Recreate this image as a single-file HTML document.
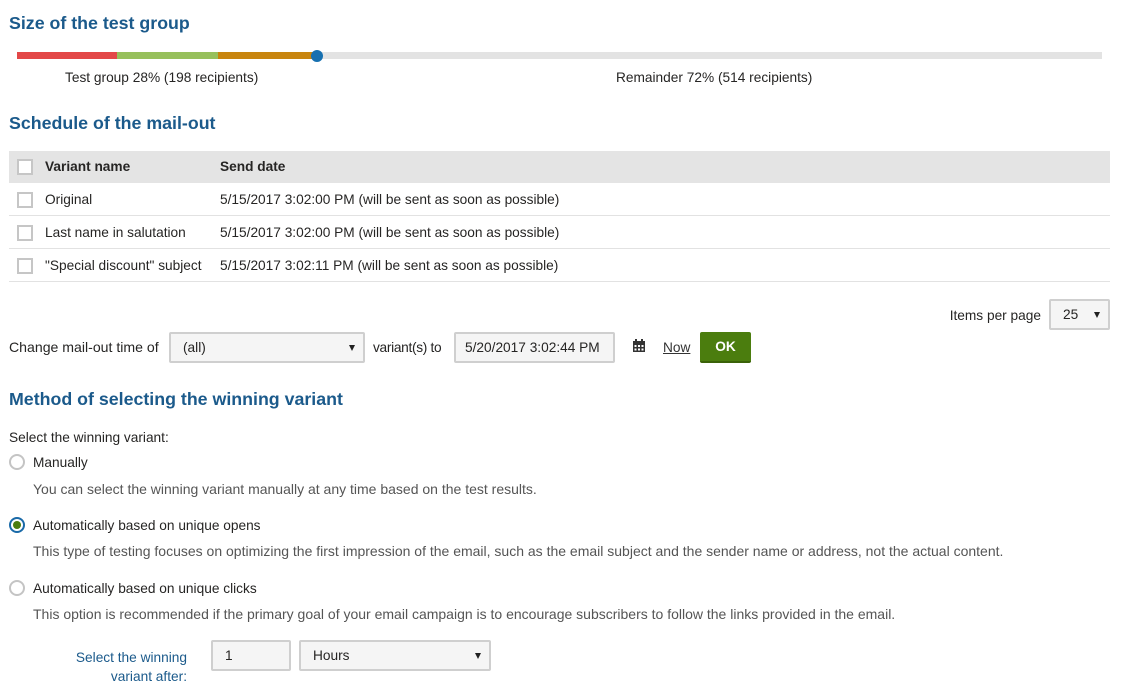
<!DOCTYPE html>
<html><head><meta charset="utf-8"><style>
*{box-sizing:border-box;margin:0;padding:0}
body{width:1121px;height:694px;overflow:hidden;background:#fff;font-family:"Liberation Sans",Arial,sans-serif;font-size:13.7px;color:#262524;position:relative}
.a{position:absolute;white-space:nowrap}
h2{position:absolute;font-size:17.8px;font-weight:bold;color:#1b5a8b;white-space:nowrap}
.cb{position:absolute;width:16px;height:16px;border:2px solid #c6c6c6;background:#fff}
.box{position:absolute;border:2px solid #cfcfcf;border-radius:2px;background:#f5f5f5;padding-left:12px;display:flex;align-items:center}
.arr{position:absolute;right:8px;top:50%;margin-top:-3px;width:0;height:0;border-left:3.5px solid transparent;border-right:3.5px solid transparent;border-top:6px solid #222}
.rad{position:absolute;width:16px;height:16px;border:2px solid #c4c4c4;border-radius:50%;background:#fff}
.row{position:absolute;left:9px;width:1101px;height:33px;border-bottom:1px solid #e2e2e2}
.desc{color:#555;font-size:14px}
</style></head><body>
<h2 style="left:9px;top:13px">Size of the test group</h2>
<div class="a" style="left:17px;top:52px;width:1085px;height:7px;background:#e3e3e3"></div>
<div class="a" style="left:17px;top:52px;width:100px;height:7px;background:#e34848"></div>
<div class="a" style="left:117px;top:52px;width:101px;height:7px;background:#97c05c"></div>
<div class="a" style="left:218px;top:52px;width:99px;height:7px;background:#c8850e"></div>
<div class="a" style="left:311px;top:50px;width:12px;height:12px;border-radius:50%;background:#1770b0"></div>
<div class="a" style="left:65px;top:70px">Test group 28% (198 recipients)</div>
<div class="a" style="left:616px;top:70px">Remainder 72% (514 recipients)</div>

<h2 style="left:9px;top:113px">Schedule of the mail-out</h2>
<div class="a" style="left:9px;top:151px;width:1101px;height:32px;background:#e4e4e4"></div>
<div class="cb" style="left:17px;top:159px"></div>
<div class="a" style="left:45px;top:159px;font-weight:bold">Variant name</div>
<div class="a" style="left:220px;top:159px;font-weight:bold">Send date</div>
<div class="row" style="top:183px"></div>
<div class="cb" style="left:17px;top:192px"></div>
<div class="a" style="left:45px;top:192px">Original</div>
<div class="a" style="left:220px;top:192px">5/15/2017 3:02:00 PM (will be sent as soon as possible)</div>
<div class="row" style="top:216px"></div>
<div class="cb" style="left:17px;top:225px"></div>
<div class="a" style="left:45px;top:225px">Last name in salutation</div>
<div class="a" style="left:220px;top:225px">5/15/2017 3:02:00 PM (will be sent as soon as possible)</div>
<div class="row" style="top:249px"></div>
<div class="cb" style="left:17px;top:258px"></div>
<div class="a" style="left:45px;top:258px">"Special discount" subject</div>
<div class="a" style="left:220px;top:258px">5/15/2017 3:02:11 PM (will be sent as soon as possible)</div>

<div class="a" style="right:80px;top:308px">Items per page</div>
<div class="box" style="left:1049px;top:299px;width:61px;height:31px">25<span class="arr"></span></div>

<div class="a" style="left:9px;top:340px;transform:scaleX(1.03);transform-origin:left">Change mail-out time of</div>
<div class="box" style="left:169px;top:332px;width:196px;height:31px">(all)<span class="arr"></span></div>
<div class="a" style="left:373px;top:340px;letter-spacing:-0.3px">variant(s) to</div>
<div class="box" style="left:454px;top:332px;width:161px;height:31px;padding-left:9px">5/20/2017 3:02:44 PM</div>
<svg class="a" style="left:632px;top:339px" width="14" height="14" viewBox="0 0 14 14"><rect x="1" y="2" width="12" height="11" fill="#333"/><rect x="3" y="0" width="2" height="3" fill="#333"/><rect x="9" y="0" width="2" height="3" fill="#333"/><g fill="#fff"><rect x="2.5" y="6" width="2" height="2"/><rect x="6" y="6" width="2" height="2"/><rect x="9.5" y="6" width="2" height="2"/><rect x="2.5" y="9.5" width="2" height="2"/><rect x="6" y="9.5" width="2" height="2"/><rect x="9.5" y="9.5" width="2" height="2"/></g></svg>
<div class="a" style="left:663px;top:340px;color:#333;text-decoration:underline">Now</div>
<div class="a" style="left:700px;top:332px;width:51px;height:31px;background:#4b7d0e;border-bottom:2px solid #3a6208;border-radius:2px;color:#fff;font-weight:bold;text-align:center;line-height:30px">OK</div>

<h2 style="left:9px;top:389px">Method of selecting the winning variant</h2>
<div class="a" style="left:9px;top:430px">Select the winning variant:</div>
<div class="rad" style="left:9px;top:454px"></div>
<div class="a" style="left:33px;top:455px">Manually</div>
<div class="a desc" style="left:33px;top:481px">You can select the winning variant manually at any time based on the test results.</div>
<div class="rad" style="left:9px;top:517px;border-color:#1a6aa8"><div style="position:absolute;left:2px;top:2px;width:8px;height:8px;border-radius:50%;background:#4b7d0e"></div></div>
<div class="a" style="left:33px;top:518px">Automatically based on unique opens</div>
<div class="a desc" style="left:33px;top:543px">This type of testing focuses on optimizing the first impression of the email, such as the email subject and the sender name or address, not the actual content.</div>
<div class="rad" style="left:9px;top:580px"></div>
<div class="a" style="left:33px;top:581px">Automatically based on unique clicks</div>
<div class="a desc" style="left:33px;top:606px">This option is recommended if the primary goal of your email campaign is to encourage subscribers to follow the links provided in the email.</div>

<div class="a" style="left:20px;top:648px;width:167px;text-align:right;color:#1b5a8b;line-height:19px">Select the winning<br>variant after:</div>
<div class="box" style="left:211px;top:640px;width:80px;height:31px">1</div>
<div class="box" style="left:299px;top:640px;width:192px;height:31px">Hours<span class="arr"></span></div>
</body></html>
